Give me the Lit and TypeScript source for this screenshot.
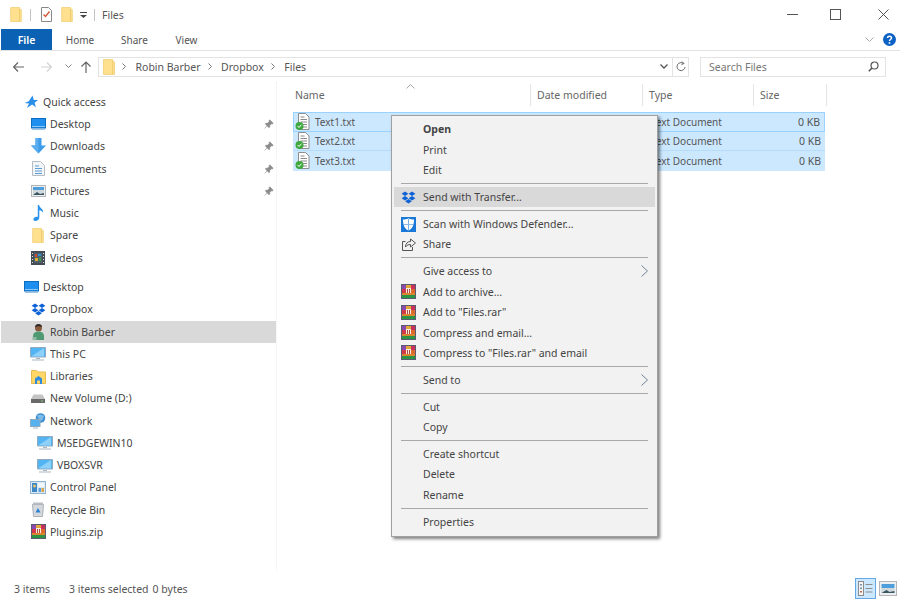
import { LitElement, html, css } from "lit";
import { customElement } from "lit/decorators.js";

const folder = (w = 13, h = 17) => html`<svg width=${w} height=${h} viewBox="0 0 13 17"><path d="M.5.5h10v1.5l2 1v13.5H.5z" fill="#ffe08e" stroke="#f2d27a"/><path d="M10.5 2v14.5" stroke="#eccb72" fill="none"/></svg>`;
const monitor = (w = 15) => html`<svg width=${w} height="12" viewBox="0 0 15 12"><rect x=".5" y=".5" width="14" height="9.5" fill="#1e8fee" stroke="#0f6dc0"/><path d="M1 8.5h13" stroke="#8cc8f7"/><path d="M1 11.5h13" stroke="#9cc7e8"/></svg>`;
const pcScreen = () => html`<svg width="16" height="15" viewBox="0 0 16 15"><path d="M.5 1.5h15v9.5H.5z" fill="#52b4f3" stroke="#8fa9bd"/><path d="M1 10.5 14 2v8.5z" fill="#8dd0fa"/><path d="M6 12.5h4M2 14h12" stroke="#a9b6c0"/></svg>`;
const dropbox = (check = false) => html`<svg width="15" height="15" viewBox="0 -1 15 15"><g fill="#0d62d6"><path d="m4 .5 3.4 2.2L4 5 .6 2.7z"/><path d="m11 .5 3.4 2.2L11 5 7.6 2.7z"/><path d="m4 5 3.4 2.2L4 9.4.6 7.2z"/><path d="m11 5 3.4 2.2L11 9.4 7.6 7.2z"/><path d="m7.5 8 3.4 2.2-3.4 2.2-3.4-2.2z"/></g>${check ? html`<circle cx="4" cy="10" r="3.6" fill="#3fa83f"/><path d="m2.3 10 1.3 1.3 2.2-2.4" stroke="#fff" fill="none"/>` : ""}</svg>`;
const rar = () => html`<svg width="15" height="15" viewBox="0 0 15 15"><path d="M0 0h15v15H0z" fill="#5a5a70"/><path d="M1 1h4v4H1z" fill="#8a4bb0"/><path d="M5 1h5v3H5z" fill="#e0a93a"/><path d="M10 1h4v4h-4z" fill="#c9305a"/><path d="M1 5h4v4H1z" fill="#d23a4a"/><path d="M5 4h5v6H5z" fill="#f6f0e2"/><path d="M10 5h4v4h-4z" fill="#dd6a2c"/><path d="M1 9h13v2H1z" fill="#d9862f"/><path d="M1 11h13v3H1z" fill="#2a9444"/><path d="M6 5h1v4H6zM8 5h1v4H8z" fill="#b0453f"/></svg>`;
const pin = () => html`<svg width="10" height="10" viewBox="0 0 10 10"><path d="M5.8.8 9.2 4.2 8.3 5 7.6 4.7 5.7 6.6 5.8 8 5 8.7 1.3 5 2 4.2 3.4 4.3 5.3 2.4 5 1.7zM3 7l-2.4 2.4" fill="#8b8b8b" stroke="#8b8b8b" stroke-width=".6"/></svg>`;
const txt = () => html`<svg width="16" height="18" viewBox="0 0 16 18"><path d="M3.5.5h7l3.5 3.5v12.5H3.5z" fill="#fff" stroke="#8d8d8d"/><path d="M5.500 4h4M5.500 6.500h6.500M5.500 9h6.500M7 11.500h5M8 14h4" stroke="#8a8a8a"/><circle cx="4.500" cy="13" r="4" fill="#3fa83f"/><path d="m2.600 13 1.400 1.500 2.500-2.800" stroke="#fff" fill="none"/></svg>`;

const icons: Record<string, () => unknown> = {
  star: () => html`<svg width="14" height="14" viewBox="0 0 14 14"><path d="M8.500.5 9.800 5H14l-3.400 2.700 1.300 4.600-3.800-2.800L3 13l2-4.500L.5 8l4.300-1.700z" fill="#2a8fe8"/></svg>`,
  desktop: () => monitor(),
  downloads: () => html`<svg width="15" height="16" viewBox="0 0 15 16"><path d="M4.500 0h6v7.500H15L7.500 15.500 0 7.500h4.500z" fill="#3d9be9"/><path d="M4.500 0h3v15.500L0 7.500h4.500z" fill="#58aef0"/></svg>`,
  documents: () => html`<svg width="13" height="15" viewBox="0 0 13 15"><path d="M.5.500h8l4 4v10H.5z" fill="#f2f5f8" stroke="#b5bcc3"/><path d="M3 5h4M3 7.500h7M3 10h7M3 12.500h7" stroke="#5d9bd2"/></svg>`,
  pictures: () => html`<svg width="15" height="12" viewBox="0 0 15 12"><rect x=".5" y=".5" width="14" height="11" fill="#eceff2" stroke="#b0b5ba"/><path d="M2 2h11v3H2z" fill="#4e9edb"/><path d="M2 5h11v5H2z" fill="#cfd8dd"/><path d="m2 10 4-3 3 2 4-1v2z" fill="#3d5560"/></svg>`,
  music: () => html`<svg width="11" height="16" viewBox="0 0 11 16"><path d="M4.800 0h1.300c.4 3 4.500 3.500 4 7.800C9.500 6 7.800 5.300 6.300 5.200v7.300c0 2.200-2 3.500-4 3.500S0 14.600.8 13.300c.8-1.200 2.600-1.800 4-1.200z" fill="#2a93ec"/></svg>`,
  spare: () => folder(12, 15),
  videos: () => html`<svg width="14" height="14" viewBox="0 0 14 14"><path d="M0 0h14v14H0z" fill="#444d55"/><path d="M3 2h8v10H3z" fill="#52606b"/><path d="M4 3h2v3H4z" fill="#d04a2a"/><path d="M7 3h3v2H7z" fill="#2f8fd8"/><path d="M4 7h3v3H4z" fill="#e0b030"/><path d="M8 6h2v4H8z" fill="#3a9a48"/><path d="M1 2h1v1H1zM1 5h1v1H1zM1 8h1v1H1zM1 11h1v1H1zM12 2h1v1h-1zM12 5h1v1h-1zM12 8h1v1h-1zM12 11h1v1h-1z" fill="#ddd"/></svg>`,
  dropboxCheck: () => dropbox(true),
  person: () => html`<svg width="13" height="16" viewBox="0 0 13 16"><circle cx="6.500" cy="4" r="3.500" fill="#8a5a3c"/><path d="M3 3.500C3 1 4.500 0 6.500 0s3.500 1 3.500 3C8 2 5 2 3 3.500z" fill="#2e2a28"/><path d="M1 16v-4c0-3 2-4.500 5.500-4.500S12 9 12 12v4z" fill="#4f9a72"/><path d="M.5 16v-3h4v3z" fill="#8fb9a3"/></svg>`,
  pc: () => pcScreen(),
  libraries: () => html`<svg width="15" height="15" viewBox="0 0 15 15"><path d="M.5 1.500h5l1.500 1.500h7.500v11.500H.5z" fill="#ffd766" stroke="#e6bd55"/><path d="M4 15V9.500l3.500-2.500L11 9.500V15H9v-3.500H6V15z" fill="#2d8be0"/></svg>`,
  drive: () => html`<svg width="14" height="9" viewBox="0 0 14 9"><path d="M2.500.5h9L14 5v4H0V5z" fill="#c4c4c4"/><path d="M0 5h14v4H0z" fill="#6a6a6a"/><path d="M10 6.500h2v1h-2z" fill="#7cd27c"/></svg>`,
  network: () => html`<svg width="16" height="16" viewBox="0 0 16 16"><circle cx="10.500" cy="5" r="4.800" fill="#3f8fd0"/><path d="M7 2.500c2-1 5-1 7 .5-1 2-1 4-3 5-2-2-3-3-4-5.500z" fill="#7dbbe9"/><rect x=".5" y="6.500" width="9.500" height="7" fill="#55b2ef" stroke="#8fa9bd"/><path d="M3 15h5" stroke="#a9b6c0"/></svg>`,
  control: () => html`<svg width="16" height="13" viewBox="0 0 16 13"><rect x=".5" y=".5" width="15" height="12" fill="#dbe9f5" stroke="#8fb3d0"/><path d="M2 2h5v9H2z" fill="#3f86c6"/><path d="M8.500 2h5.500v4H8.500z" fill="#f4f7fa"/><path d="M8.500 7h2.500v4H8.500z" fill="#5aa3de"/><path d="M11.500 7H14v4h-2.500z" fill="#d9a548"/><circle cx="4.500" cy="5" r="1.500" fill="#e7c36d"/></svg>`,
  recycle: () => html`<svg width="12" height="15" viewBox="0 0 12 15"><path d="M.5 2.500h11l-1 12h-9z" fill="#d5d9dd" stroke="#aab0b5"/><path d="M1 .5h10v2H1z" fill="#b9bfc4"/><path d="m6 6 2.500 4.500h-5z" fill="#2b82d0"/></svg>`,
  rar,
};

const pinned = new Set(["Desktop", "Downloads", "Documents", "Pictures"]);

const sideGroups: { label: string; icon: string; level: number; sel?: boolean }[][] = [
  [
    { label: "Quick access", icon: "star", level: 0 },
    { label: "Desktop", icon: "desktop", level: 1 },
    { label: "Downloads", icon: "downloads", level: 1 },
    { label: "Documents", icon: "documents", level: 1 },
    { label: "Pictures", icon: "pictures", level: 1 },
    { label: "Music", icon: "music", level: 1 },
    { label: "Spare", icon: "spare", level: 1 },
    { label: "Videos", icon: "videos", level: 1 },
  ],
  [
    { label: "Desktop", icon: "desktop", level: 0 },
    { label: "Dropbox", icon: "dropboxCheck", level: 1 },
    { label: "Robin Barber", icon: "person", level: 1, sel: true },
    { label: "This PC", icon: "pc", level: 1 },
    { label: "Libraries", icon: "libraries", level: 1 },
    { label: "New Volume (D:)", icon: "drive", level: 1 },
    { label: "Network", icon: "network", level: 1 },
    { label: "MSEDGEWIN10", icon: "pc", level: 2 },
    { label: "VBOXSVR", icon: "pc", level: 2 },
    { label: "Control Panel", icon: "control", level: 1 },
    { label: "Recycle Bin", icon: "recycle", level: 1 },
    { label: "Plugins.zip", icon: "rar", level: 1 },
  ],
];

type MenuItem = { t: string; icon?: () => unknown; bold?: boolean; hot?: boolean; sub?: boolean };
const shield = () => html`<svg width="15" height="15" viewBox="0 0 15 15"><path d="M0 0h15v15H0z" fill="#1a79d8"/><path d="M7.500 1.300c1.700 1 3.700 1.300 5.500 1.300 0 5.200-1.200 8.900-5.500 11C3.200 11.500 2 7.800 2 2.600c1.800 0 3.800-.3 5.500-1.300z" fill="#fff"/><path d="M7.200 2v11.500h.6V2zM2.500 7.200h10v.6h-10z" fill="#1a79d8"/></svg>`;
const share = () => html`<svg width="14" height="13" viewBox="0 0 14 13"><path d="M3.500 3.500H.5v9h10V9" fill="none" stroke="#555"/><path d="M8.500 1v2.500C5.500 3.500 3.500 5.500 3.500 9 5 7 6.500 6.500 8.500 6.500V9l5-4z" fill="none" stroke="#555"/></svg>`;
const menu: MenuItem[][] = [
  [{ t: "Open", bold: true }, { t: "Print" }, { t: "Edit" }],
  [{ t: "Send with Transfer...", icon: () => dropbox(), hot: true }],
  [{ t: "Scan with Windows Defender...", icon: shield }, { t: "Share", icon: share }],
  [
    { t: "Give access to", sub: true },
    { t: "Add to archive...", icon: rar },
    { t: 'Add to "Files.rar"', icon: rar },
    { t: "Compress and email...", icon: rar },
    { t: 'Compress to "Files.rar" and email', icon: rar },
  ],
  [{ t: "Send to", sub: true }],
  [{ t: "Cut" }, { t: "Copy" }],
  [{ t: "Create shortcut" }, { t: "Delete" }, { t: "Rename" }],
  [{ t: "Properties" }],
];

const columns = ["Name", "Date modified", "Type", "Size"];
const files = ["Text1.txt", "Text2.txt", "Text3.txt"];

@customElement("app-root")
export class AppRoot extends LitElement {
  static styles = css`
    :host { display: block; position: relative; width: 900px; height: 600px; overflow: hidden; background: #fff; color: #444; font: 10.5px "Noto Sans", sans-serif; }
    .win { display: flex; flex-direction: column; height: 600px; }
    svg { display: block; flex: none; }
    .title { height: 29px; display: flex; align-items: center; padding-left: 10px; flex: none; }
    .title .sep { width: 1px; height: 12px; background: #c4c4c4; }
    .title .s1 { margin: 0 10px 0 8px; }
    .title .s2 { margin: 0 7px 0 7px; }
    .title .f2 { margin-left: 9px; }
    .title .qa { margin-left: 7px; }
    .title .name { color: #555; }
    .ctl { margin-left: auto; display: flex; align-items: center; padding-right: 11px; }
    .ctl .mx { margin: 0 37px 0 32px; }
    .tabs { height: 21px; display: flex; align-items: stretch; border-bottom: 1px solid #e2e2e2; flex: none; }
    .tab { display: flex; align-items: center; justify-content: center; color: #555; font-size: 10px; }
    .file { width: 51px; margin-left: 1px; margin-right: 14px; background: #0b62b4; color: #fff; font-weight: 600; font-size: 10.5px; }
    .tab.home { width: 28px; margin-right: 27px; }
    .tab.shr { width: 27px; margin-right: 27px; }
    .tab.view { width: 23px; }
    .help { margin-left: auto; display: flex; align-items: center; gap: 9px; padding-right: 4px; }
    .nav { height: 31px; display: flex; align-items: center; flex: none; padding-left: 13px; }
    .nav .fwd { margin-left: 17px; }
    .nav .drop { margin-left: 13px; }
    .nav .up { margin-left: 9px; }
    .addr { margin-left: 7px; width: 591px; height: 20px; box-sizing: border-box; border: 1px solid #e3e3e3; display: flex; align-items: center; padding-left: 4px; color: #555; }
    .addr .cr { margin: 0 9.500px 0 7px; }
    .addr .end { margin-left: auto; display: flex; align-items: center; height: 100%; }
    .addr .rf { width: 15px; height: 100%; border-left: 1px solid #e3e3e3; display: flex; align-items: center; justify-content: center; margin-left: 4px; }
    .search { margin-left: 11px; width: 186px; height: 20px; box-sizing: border-box; border: 1px solid #e3e3e3; display: flex; align-items: center; justify-content: space-between; padding: 0 6px 0 8px; color: #777; }
    .body { flex: 1; display: flex; min-height: 0; }
    .side { width: 275px; margin-left: 1px; padding-top: 8.800px; box-sizing: border-box; flex: none; }
    .group + .group { margin-top: 7.300px; }
    .row { height: 22.250px; display: flex; align-items: center; position: relative; color: #444; }
    .row.sel { background: #d9d9d9; }
    .ic { width: 18px; display: flex; justify-content: center; flex: none; }
    .l0 { padding-left: 21px; }
    .l1 { padding-left: 28px; }
    .l2 { padding-left: 35px; }
    .row .lab { margin-left: 3px; }
    .row .pin { margin-left: auto; margin-right: 2px; }
    .main { flex: 1; padding: 2px 0 0 11px; border-left: 1px dotted #eee; min-width: 0; }
    .head { display: flex; height: 22px; position: relative; color: #666; }
    .col { display: flex; align-items: center; padding-left: 6px; box-sizing: border-box; border-right: 1px solid #e5e5e5; }
    .col.c0 { width: 243px; padding-left: 7px; }
    .col.c1 { width: 112px; }
    .col.c2 { width: 111px; }
    .col.c3 { width: 73px; }
    .sort { position: absolute; left: 118px; top: 0; }
    .files { margin: 6px 0 0 5px; width: 532px; }
    .f { height: 19.500px; box-sizing: border-box; background: #cce8ff; display: flex; align-items: center; padding-left: 2px; color: #555; border-bottom: 1px solid #b5dcfb; font-size: 10px; }
    .f.first { border: 1px solid #99d1ff; padding-left: 1px; }
    .f:last-child { border-bottom: 0; }
    .f .fn { width: 336px; margin-left: 4px; }
    .f .ty { flex: 1; }
    .f .sz { padding-right: 4px; font-size: 10.500px; }
    .status { height: 28px; flex: none; box-sizing: border-box; display: flex; align-items: center; padding: 5px 3px 0 14px; color: #555; }
    .status .sp1 { margin-left: 19px; }
    .status .sp2 { margin-left: 4px; }
    .status .views { margin-left: auto; display: flex; align-items: center; gap: 3px; }
    .vw { width: 21px; height: 21px; box-sizing: border-box; background: #cce8ff; border: 1px solid #66a7e8; display: flex; align-items: center; justify-content: center; }
    .menu { position: absolute; left: 391px; top: 115px; width: 267px; height: 422px; box-sizing: border-box; background: #f2f2f2; border: 1px solid #a0a0a0; box-shadow: 2px 2px 3px rgba(0,0,0,.5); padding: 3.300px 2px; color: #444; }
    .mi { height: 20.400px; display: flex; align-items: center; position: relative; }
    .mi.hot { background: #d9d9d9; }
    .mi.bold { font-weight: 700; }
    .mi .mic { width: 15px; margin-left: 7px; margin-right: 7px; flex: none; display: flex; justify-content: center; }
    .mi .arrow { margin-left: auto; margin-right: 7px; }
    .msep { height: 1px; background: #a8a8a8; margin: 2.750px 7px; }
  `;

  private sideRow(r: { label: string; icon: string; level: number; sel?: boolean }, group: number) {
    const cls = `row l${r.level}${r.sel ? " sel" : ""}`;
    return html`<div class=${cls}>
      <span class="ic">${icons[r.icon]()}</span><span class="lab">${r.label}</span>
      ${group === 0 && r.level === 1 && pinned.has(r.label) ? html`<span class="pin">${pin()}</span>` : ""}
    </div>`;
  }

  render() {
    return html`
      <div class="win">
        <div class="title">
          ${folder(12, 15)}
          <span class="sep s1"></span>
          <svg width="11" height="15" viewBox="0 0 11 15"><path d="M.5.500h7l3 3v11H.5z" fill="#fff" stroke="#888"/><path d="m2.500 7.500 2 2 4-5" stroke="#d9593a" stroke-width="1.400" fill="none"/></svg>
          <span class="f2">${folder(12, 15)}</span>
          <svg class="qa" width="7" height="6" viewBox="0 0 7 6"><path d="M0 0h7v1H0z" fill="#444"/><path d="m0 3 3.500 3L7 3z" fill="#444"/></svg>
          <span class="sep s2"></span>
          <span class="name">Files</span>
          <div class="ctl">
            <svg width="11" height="11" viewBox="0 0 11 11"><path d="M0 5.500h11" stroke="#555"/></svg>
            <svg class="mx" width="11" height="11" viewBox="0 0 11 11"><rect x=".5" y=".5" width="10" height="10" fill="none" stroke="#555"/></svg>
            <svg width="11" height="11" viewBox="0 0 11 11"><path d="m.5.500 10 10M10.500.500l-10 10" stroke="#555"/></svg>
          </div>
        </div>
        <div class="tabs">
          <div class="tab file">File</div>
          <div class="tab home">Home</div>
          <div class="tab shr">Share</div>
          <div class="tab view">View</div>
          <div class="help">
            <svg width="9" height="6" viewBox="0 0 9 6"><path d="m.5.500 4 4 4-4" fill="none" stroke="#aaa"/></svg>
            <svg width="13" height="13" viewBox="0 0 13 13"><circle cx="6.500" cy="6.500" r="6.500" fill="#0b62c4"/><path d="M4.500 5c0-2.500 4-2.500 4 0 0 1.500-2 1.500-2 3" fill="none" stroke="#fff" stroke-width="1.500"/><path d="M5.700 9.200h1.600v1.600H5.700z" fill="#fff"/></svg>
          </div>
        </div>
        <div class="nav">
          <svg width="11" height="10" viewBox="0 0 11 10"><path d="M11 5H1M5 .5.700 5 5 9.500" fill="none" stroke="#666" stroke-width="1.200"/></svg>
          <svg class="fwd" width="11" height="10" viewBox="0 0 11 10"><path d="M0 5h10M6 .5 10.300 5 6 9.500" fill="none" stroke="#d4d4d4" stroke-width="1.200"/></svg>
          <svg class="drop" width="7" height="5" viewBox="0 0 7 5"><path d="m.5.500 3 3 3-3" fill="none" stroke="#888"/></svg>
          <svg class="up" width="10" height="12" viewBox="0 0 10 12"><path d="M5 12V1M.5 5.500 5 1l4.500 4.500" fill="none" stroke="#666" stroke-width="1.200"/></svg>
          <div class="addr">
            ${folder(12, 16)}
            <span class="cr">${this.crumb()}</span><span>Robin Barber</span>
            <span class="cr">${this.crumb()}</span><span>Dropbox</span>
            <span class="cr">${this.crumb()}</span><span>Files</span>
            <span class="end">
              <svg width="8" height="5" viewBox="0 0 8 5"><path d="m.5.500 3.500 3.500L7.500.500" fill="none" stroke="#555" stroke-width="1.300"/></svg>
              <span class="rf"><svg width="10" height="11" viewBox="0 0 10 11"><path d="M7.500 2.500A4 4 0 1 0 9 6M6 .500l2 2-2.500 1" fill="none" stroke="#666"/></svg></span>
            </span>
          </div>
          <div class="search">
            <span>Search Files</span>
            <svg width="11" height="11" viewBox="0 0 11 11"><circle cx="6.500" cy="4.500" r="3.500" fill="none" stroke="#555" stroke-width="1.200"/><path d="M4 7 .8 10.200" stroke="#555" stroke-width="1.600"/></svg>
          </div>
        </div>
        <div class="body">
          <div class="side">
            ${sideGroups.map((g, gi) => html`<div class="group">${g.map((r) => this.sideRow(r, gi))}</div>`)}
          </div>
          <div class="main">
            <div class="head">
              ${columns.map((c, i) => html`<div class="col c${i}">${c}</div>`)}
              <svg class="sort" width="9" height="5" viewBox="0 0 9 5"><path d="m.5 4.500 4-4 4 4" fill="none" stroke="#aaa"/></svg>
            </div>
            <div class="files">
              ${files.map((f, i) => html`<div class="f ${i === 0 ? "first" : ""}">
                ${txt()}<span class="fn">${f}</span><span class="ty">Text Document</span><span class="sz">0 KB</span>
              </div>`)}
            </div>
          </div>
        </div>
        <div class="status">
          <span>3 items</span><span class="sp1">3 items selected</span><span class="sp2">0 bytes</span>
          <div class="views">
            <div class="vw"><svg width="15" height="15" viewBox="0 0 15 15"><rect x=".5" y=".5" width="5" height="14" fill="#f4f4f4" stroke="#8c8c8c"/><path d="M2 3h2v1.500H2zM2 6.500h2V8H2z" fill="#7a8fa5"/><path d="M2 10h2v1.500H2z" fill="#c96b4a"/><path d="M7.500 3.500h7M7.500 7.500h7M7.500 11h7" stroke="#8c8c8c" stroke-width="1.200"/></svg></div>
            <svg width="18" height="15" viewBox="0 0 18 15"><rect x=".5" y=".5" width="17" height="14" fill="#eceff2" stroke="#b5b5b5"/><path d="M2.500 3h13v4h-13z" fill="#4e9edb"/><path d="M2.500 7h13v5h-13z" fill="#cfd8dd"/><path d="m2.500 12 5-3 3 2 5-1v2z" fill="#3d5560"/></svg>
          </div>
        </div>
      </div>
      <div class="menu">
        ${menu.map((g, gi) => html`
          ${gi > 0 ? html`<div class="msep"></div>` : ""}
          ${g.map((m) => html`<div class="mi ${m.hot ? "hot" : ""} ${m.bold ? "bold" : ""}">
            <span class="mic">${m.icon ? m.icon() : ""}</span>
            <span>${m.t}</span>
            ${m.sub ? html`<svg class="arrow" width="7" height="12" viewBox="0 0 7 12"><path d="m.5.500 6 5.500-6 5.500" fill="none" stroke="#6f8296"/></svg>` : ""}
          </div>`)}
        `)}
      </div>
    `;
  }

  private crumb() {
    return html`<svg width="4" height="7" viewBox="0 0 4 7"><path d="m.5.500 3 3-3 3" fill="none" stroke="#777"/></svg>`;
  }
}
